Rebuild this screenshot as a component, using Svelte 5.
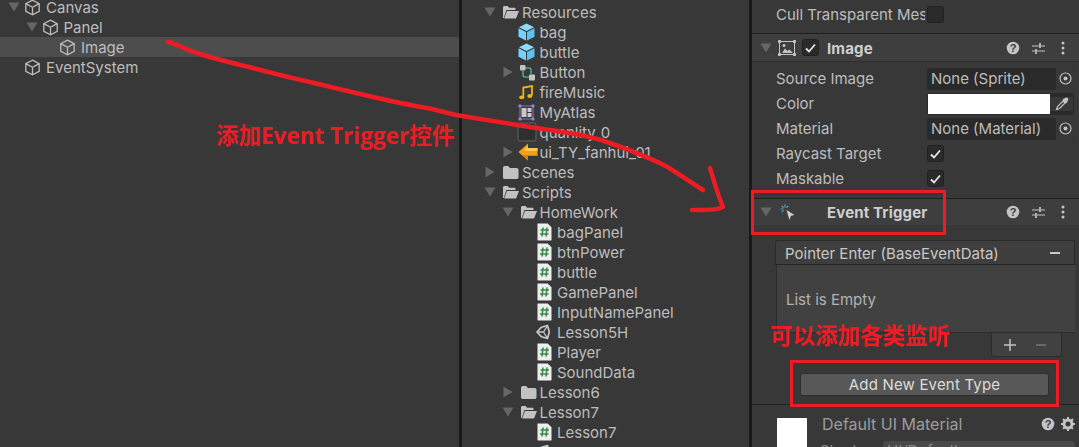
<script>
  const hierarchy = [
    { label: 'Canvas', level: 0, arrow: 'open' },
    { label: 'Panel', level: 1, arrow: 'open' },
    { label: 'Image', level: 2, selected: true },
    { label: 'EventSystem', level: 0 }
  ];
  const project = [
    { label: 'Resources', level: 0, arrow: 'open', icon: 'open' },
    { label: 'bag', level: 1, icon: 'blue' },
    { label: 'buttle', level: 1, icon: 'blue' },
    { label: 'Button', level: 1, arrow: 'closed', icon: 'anim' },
    { label: 'fireMusic', level: 1, icon: 'music' },
    { label: 'MyAtlas', level: 1, icon: 'atlas' },
    { label: 'quanlity_0', level: 1, icon: 'mat' },
    { label: 'ui_TY_fanhui_01', level: 1, arrow: 'closed', icon: 'back' },
    { label: 'Scenes', level: 0, arrow: 'closed', icon: 'folder' },
    { label: 'Scripts', level: 0, arrow: 'open', icon: 'open' },
    { label: 'HomeWork', level: 1, arrow: 'open', icon: 'open' },
    { label: 'bagPanel', level: 2, icon: 'cs' },
    { label: 'btnPower', level: 2, icon: 'cs' },
    { label: 'buttle', level: 2, icon: 'cs' },
    { label: 'GamePanel', level: 2, icon: 'cs' },
    { label: 'InputNamePanel', level: 2, icon: 'cs' },
    { label: 'Lesson5H', level: 2, icon: 'unity' },
    { label: 'Player', level: 2, icon: 'cs' },
    { label: 'SoundData', level: 2, icon: 'cs' },
    { label: 'Lesson6', level: 1, arrow: 'closed', icon: 'folder' },
    { label: 'Lesson7', level: 1, arrow: 'open', icon: 'open' },
    { label: 'Lesson7', level: 2, icon: 'cs' },
    { label: 'Lesson7', level: 2, icon: 'unity' }
  ];
</script>

{#snippet arrow(kind)}
  <span class="arrow">
    {#if kind === 'open'}
      <svg width="12" height="12" viewBox="0 0 12 12"><path d="M0.500 1.500h11L6 10.500z" fill="#666" /></svg>
    {:else if kind === 'closed'}
      <svg width="12" height="12" viewBox="0 0 12 12"><path d="M1.500 0.500v11l9-5.500z" fill="#666" /></svg>
    {/if}
  </span>
{/snippet}

{#snippet cube()}
  <svg class="ic" width="17" height="17" viewBox="0 0 17 17" fill="none" stroke="#bcbcbc" stroke-width="1.300"><path d="M8.500 1.200 15.200 4.600v7.800L8.500 15.800 1.800 12.400V4.600zM1.800 4.600l6.700 3.700 6.700-3.700M8.500 8.300v7.500" /></svg>
{/snippet}

{#snippet asset(kind)}
  {#if kind === 'open'}
    <svg class="ic folder" width="17" height="14" viewBox="0 0 17 14"><path d="M1 13V2.500C1 1.700 1.600 1 2.400 1h3.200l1.600 1.800h5.300c.6 0 1 .5 1 1V5H4.400L1.800 13z" fill="#c2c2c2" /><path d="M4.900 6H17l-3 7.500H2.200z" fill="#c2c2c2" /></svg>
  {:else if kind === 'folder'}
    <svg class="ic folder" width="17" height="14" viewBox="0 0 17 14"><path d="M1 3c0-1 .6-2 1.600-2h3.600l1.700 2h6.700c1 0 1.900.8 1.900 1.800v7.400c0 1-.9 1.800-1.900 1.800H2.600C1.600 14 1 13 1 12z" fill="#c2c2c2" /></svg>
  {:else if kind === 'blue'}
    <svg class="ic blue" width="17" height="18" viewBox="0 0 17 18"><path d="M8.500 0.500 16 4.300 8.500 8.100 1 4.300z" fill="#8cdcfd" /><path d="M.5 5.300l7.500 3.800V17.500L.5 13.700z" fill="#76d2fa" /><path d="M16.500 5.300 9 9.100V17.500l7.500-3.800z" fill="#5cc2f2" /></svg>
  {:else if kind === 'anim'}
    <svg class="ic anim" width="16" height="17" viewBox="0 0 16 17"><path d="M6 4h4.500c.8 0 1.500.7 1.500 1.500V10M10 13H5.500C4.700 13 4 12.300 4 11.500V7" fill="none" stroke="#5ed0b4" stroke-width="1.100" /><rect x="1" y="1" width="5.500" height="5.500" rx="1" fill="#c4c4c4" /><rect x="10" y="10.500" width="6" height="6" rx="1" fill="#c4c4c4" /></svg>
  {:else if kind === 'music'}
    <svg class="ic music" width="14" height="15" viewBox="0 0 14 15"><path d="M4.300 12V2.600L13 1v9.500" fill="none" stroke="#efb50f" stroke-width="1.800" /><ellipse cx="2.700" cy="12.300" rx="2.500" ry="1.900" fill="#efb50f" /><ellipse cx="10.800" cy="11" rx="2.500" ry="1.900" fill="#efb50f" /></svg>
  {:else if kind === 'atlas'}
    <svg class="ic atlas" width="17" height="17" viewBox="0 0 17 17"><rect x="2" y="2" width="13" height="13" fill="none" stroke="#8a70c8" stroke-width="1" /><rect x="3.500" y="4" width="5" height="9" fill="#c8c8c8" /><rect x="9.500" y="4" width="4" height="4" fill="#c8c8c8" /><rect x="9.500" y="9" width="4" height="4" fill="#c8c8c8" /><g fill="#9c82dc"><rect x="0.500" y="0.500" width="3" height="3" rx="1" /><rect x="13.500" y="0.500" width="3" height="3" rx="1" /><rect x="0.500" y="13.500" width="3" height="3" rx="1" /><rect x="13.500" y="13.500" width="3" height="3" rx="1" /></g></svg>
  {:else if kind === 'mat'}
    <svg class="ic mat" width="20" height="20" viewBox="0 0 20 20"><rect x="1" y="1" width="18" height="18" rx="2.500" fill="#2f2f2f" stroke="#555" stroke-width="1.400" /></svg>
  {:else if kind === 'back'}
    <svg class="ic back" width="20" height="18" viewBox="0 0 20 18"><path d="M0.500 9 10 0.500V5h9.500v8H10v4.500z" fill="#f5a013" /><path d="M10 5h9.500v3H5.500L10 3z" fill="#fcc65a" /><path d="M4 12h15.500v1H10v4.500z" fill="#d9820e" /></svg>
  {:else if kind === 'cs'}
    <svg class="ic cs" width="15" height="18" viewBox="0 0 15 18"><path d="M0.500 1.200C.5.600.9.500 1.300.500h9.400L14.500 4.300V17c0 .3-.2.500-.6.500H1c-.3 0-.5-.2-.5-.5z" fill="#eeeeee" /><path d="M3.500 7h8.500M3 11h8.500M6 4.500 5 13.500M10 4.500 9 13.500" stroke="#3b8a4d" stroke-width="1.600" fill="none" /></svg>
  {:else if kind === 'unity'}
    <svg class="ic unity" width="15" height="16" viewBox="0 0 15 16" fill="none" stroke="#c8c8c8"><path d="M1 8 5.500 3.200 11.500 1.500 13.300 8 11.500 14.500 5.500 12.800z" stroke-width="1.700" stroke-linejoin="round" /><path d="M1 8h6.500L11.500 1.500M7.500 8l4 6.500" stroke-width="1.300" /></svg>
  {/if}
{/snippet}

{#snippet headIcons()}
  <div class="head-icons">
    <svg width="14" height="14" viewBox="0 0 14 14"><circle cx="7" cy="7" r="6.300" fill="#c4c4c4" /><text x="7" y="11" text-anchor="middle" class="q">?</text></svg>
    <svg width="14" height="14" viewBox="0 0 14 14" fill="none" stroke="#c4c4c4" stroke-width="1.200"><path d="M1 5h7M10 5h4M1 10h3M6 10h8" /><path d="M9 2v5M5 8v5" stroke-width="1.700" /></svg>
    <svg width="14" height="14" viewBox="0 0 14 14" fill="#c4c4c4"><circle cx="7" cy="2" r="1.500" /><circle cx="7" cy="7" r="1.500" /><circle cx="7" cy="12" r="1.500" /></svg>
  </div>
{/snippet}

{#snippet check(on)}
  <span class="check">
    {#if on}
      <svg width="11" height="10" viewBox="0 0 11 10"><path d="M1 5.500 4 8.500 10 1.500" fill="none" stroke="#e8e8e8" stroke-width="1.800" /></svg>
    {/if}
  </span>
{/snippet}

{#snippet objectField(text)}
  <div class="field obj">
    <span class="obj-text">{text}</span>
    <span class="picker"><svg width="13" height="13" viewBox="0 0 13 13"><circle cx="6.500" cy="6.500" r="5.500" fill="none" stroke="#c4c4c4" stroke-width="1.200" /><circle cx="6.500" cy="6.500" r="2" fill="#c4c4c4" /></svg></span>
  </div>
{/snippet}

<div class="app">
  <section class="hierarchy">
    <div class="tree up">
      {#each hierarchy as row}
        <div class="row hrow" class:selected={row.selected} style="padding-left:{4 + row.level * 17.5}px">
          {@render arrow(row.arrow)}
          <span class="slot">{@render cube()}</span>
          <span class="label">{row.label}</span>
        </div>
      {/each}
    </div>
  </section>

  <section class="project">
    <div class="tree">
      {#each project as row}
        <div class="row" style="padding-left:{18 + row.level * 17.5}px">
          {@render arrow(row.arrow)}
          <span class="slot">{@render asset(row.icon)}</span>
          <span class="label">{row.label}</span>
        </div>
      {/each}
    </div>
  </section>

  <section class="inspector">
    <div class="prop cull">
      <span class="name clip">Cull Transparent Mesh</span>
      {@render check(false)}
    </div>

    <header class="comp-head">
      <svg class="tri" width="12" height="12" viewBox="0 0 12 12"><path d="M0.500 1.500h11L6 10.500z" fill="#666" /></svg>
      <svg class="image-ic" width="18" height="16" viewBox="0 0 18 16" fill="none" stroke="#c4c4c4"><rect x="1.500" y="1.500" width="15" height="13" /><path d="M4 13 7 8.500l2.500 2.500 2-1.500L15 13z" fill="#c4c4c4" stroke="none" /><circle cx="6" cy="5.500" r="1.500" fill="#c4c4c4" stroke="none" /><g fill="#c4c4c4" stroke="none"><rect width="3" height="3" rx=".8" /><rect x="15" width="3" height="3" rx=".8" /><rect y="13" width="3" height="3" rx=".8" /><rect x="15" y="13" width="3" height="3" rx=".8" /></g></svg>
      <span class="head-check">{@render check(true)}</span>
      <span class="comp-title low">Image</span>
      {@render headIcons()}
    </header>

    <div class="props">
      <div class="prop"><span class="name">Source Image</span>{@render objectField('None (Sprite)')}</div>
      <div class="prop">
        <span class="name">Color</span>
        <div class="field color">
          <span class="swatch"></span>
          <span class="dropper"><svg width="14" height="14" viewBox="0 0 14 14"><path d="M8 3 11 6M1.500 12.500l1-3 5.500-5.500 2 2-5.500 5.500z" fill="none" stroke="#c4c4c4" stroke-width="1.200" /><path d="M7.500 2.500 10.500.8c.7-.5 1.600-.3 2.200.3s.8 1.500.3 2.200L11.500 6.500z" fill="#c4c4c4" /></svg></span>
        </div>
      </div>
      <div class="prop"><span class="name">Material</span>{@render objectField('None (Material)')}</div>
      <div class="prop"><span class="name">Raycast Target</span>{@render check(true)}</div>
      <div class="prop"><span class="name">Maskable</span>{@render check(true)}</div>
    </div>

    <header class="comp-head second">
      <svg class="tri" width="12" height="12" viewBox="0 0 12 12"><path d="M0.500 1.500h11L6 10.500z" fill="#666" /></svg>
      <svg class="trigger-ic" width="18" height="17" viewBox="0 0 18 17"><path d="M6.500 6l8 5-3.500.7L9.500 16z" fill="#d0d0d0" /><g stroke="#4aa8d8" stroke-width="1.200" fill="none"><path d="M5 0.500v3M0.500 5h3M1.800 1.800 3.600 3.600M8.200 1.800 6.400 3.600M1.800 8.200 3.600 6.400" /></g></svg>
      <span class="comp-title wide">Event Trigger</span>
      {@render headIcons()}
    </header>

    <div class="event-wrap">
      <div class="event-head">
        <span class="down">Pointer Enter (BaseEventData)</span>
        <span class="minus"></span>
      </div>
      <div class="event-body"><span class="down">List is Empty</span></div>
      <div class="event-foot">
        <svg width="14" height="14" viewBox="0 0 14 14"><path d="M7 1v12M1 7h12" stroke="#c4c4c4" stroke-width="1.500" /></svg>
        <svg width="14" height="14" viewBox="0 0 14 14"><path d="M2 7h10" stroke="#777" stroke-width="1.500" /></svg>
      </div>
      <button class="add">Add New Event Type</button>
    </div>

    <div class="material">
      <span class="preview"></span>
      <div class="mat-main">
        <div class="mat-title">
          <span>Default UI Material</span>
          <span class="mat-icons">
            <svg width="14" height="14" viewBox="0 0 14 14"><circle cx="7" cy="7" r="6.300" fill="#c4c4c4" /><text x="7" y="11" text-anchor="middle" class="q">?</text></svg>
            <svg width="14" height="14" viewBox="0 0 14 14"><circle cx="7" cy="7" r="4" fill="none" stroke="#c4c4c4" stroke-width="3" /><path d="M7 0v14M0 7h14M2 2l10 10M12 2 2 12" stroke="#c4c4c4" stroke-width="2" stroke-dasharray="2.500 9" /></svg>
          </span>
        </div>
        <div class="shader"><span>Shader</span><span class="shader-val">UI/Default</span></div>
      </div>
    </div>
  </section>

  <svg class="ink" width="1079" height="447" viewBox="0 0 1079 447" fill="none" stroke="#ed1c24" stroke-linecap="round" stroke-linejoin="round">
    <path stroke-width="4.500" d="M168 42C178 44 188 51 197 53C215 59 232 63 249 67C275 74 300 80 323 85C360 94 395 103 427 108C437 110 447 113 456 115C480 119 505 123 530 127C555 131 580 133 604 141C625 148 645 156 664 165C678 173 690 182 703 190" />
    <path stroke-width="4.500" d="M710 168C714 182 718 195 723 207C714 211 702 210 692 210" />
    <rect stroke-width="3" x="752.500" y="191.500" width="192" height="42" stroke-linejoin="miter" />
    <rect stroke-width="3" x="791.500" y="361.500" width="266" height="44" stroke-linejoin="miter" />
  </svg>
  <div class="note one">添加Event Trigger控件</div>
  <div class="note two">可以添加各类监听</div>
</div>

<style>
  :global(body) { margin: 0; background: #383838; }
  .app {
    position: relative;
    display: flex;
    width: 1079px;
    height: 447px;
    overflow: hidden;
    background: #191919;
    font-family: Inter, "Noto Sans", sans-serif;
    font-size: 15px;
    color: #bdbdbd;
  }
  .hierarchy { width: 459px; background: #383838; margin-right: 3px; }
  .project { width: 287px; background: #383838; margin-right: 3px; }
  .inspector { flex: 1; min-width: 0; background: #383838; }
  .tree { padding-top: 2px; }
  .tree.up { padding-top: 0; margin-top: -3px; }
  .row { display: flex; align-items: center; height: 20px; white-space: nowrap; }
  .row.selected { background: #4d4d4d; }
  .arrow { width: 20px; display: flex; justify-content: center; flex: none; }
  .slot { width: 22px; flex: none; display: flex; align-items: center; }
  .ic { display: block; }
  .folder { margin-left: 2px; }
  .anim { margin-left: 1px; }
  .music { margin-left: 1px; }
  .mat { margin-left: -1px; }
  .cs { margin-left: 2px; }
  .unity { margin-left: 1px; }

  .prop { display: flex; align-items: center; height: 25px; padding: 0 5px 0 24px; }
  .prop .name { width: 149px; margin-right: 2px; flex: none; }
  .cull { border-bottom: 1px solid #1f1f1f; height: 29px; padding-bottom: 4px; }
  .clip { overflow: hidden; white-space: nowrap; }
  .check { display: flex; align-items: center; justify-content: center; width: 17px; height: 17px; box-sizing: border-box; background: #2a2a2a; border: 1px solid #212121; border-radius: 3px; }
  .comp-head { display: flex; align-items: center; height: 27px; background: #3e3e3e; border-bottom: 1px solid #303030; padding: 0 9px 0 8px; color: #cfcfcf; }
  .comp-head.second { height: 26px; border-top: 1px solid #1f1f1f; border-bottom: 0; }
  .tri { flex: none; }
  .image-ic { margin-left: 6px; }
  .head-check { margin-left: 6px; margin-right: 8px; }
  .trigger-ic { margin-left: 8px; }
  .comp-title { font-weight: 700; flex: 1; letter-spacing: .15px; }
  .comp-title.low { padding-top: 2px; }
  .comp-title.wide { margin-left: 29px; }
  .head-icons { display: flex; gap: 11px; }
  .q { font: 700 11px "Liberation Sans", sans-serif; fill: #3e3e3e; }
  .props { padding-top: 4px; padding-bottom: 7px; }
  .field { height: 22px; box-sizing: border-box; flex: 1; display: flex; align-items: center; background: #2a2a2a; border-radius: 3px; }
  .obj { overflow: hidden; }
  .obj-text { flex: 1; padding-left: 4px; white-space: nowrap; }
  .picker { width: 18px; height: 100%; background: #383838; display: flex; align-items: center; justify-content: center; border-radius: 0 3px 3px 0; }
  .color { border: 1px solid #2a2a2a; }
  .swatch { width: 122px; height: 20px; background: #fff; }
  .dropper { flex: 1; display: flex; justify-content: center; background: #383838; }

  .event-wrap { padding: 15px 4px 0 23px; height: 180px; box-sizing: border-box; border-bottom: 1px solid #232323; }
  .event-head { display: flex; justify-content: space-between; align-items: center; height: 25px; box-sizing: border-box; padding: 0 14px 0 9px; border: 1px solid #2b2b2b; border-bottom-color: #242424; border-radius: 3px 3px 0 0; background: #3e3e3e; color: #c8c8c8; }
  .down { padding-top: 2px; }
  .minus { width: 10px; height: 2px; background: #c8c8c8; }
  .event-body { height: 68px; box-sizing: border-box; display: flex; align-items: center; padding-left: 9px; margin-left: 1px; background: #414141; border: solid #2b2b2b; border-width: 0 0 1px 1px; color: #b2b2b2; }
  .event-foot { width: 71px; height: 24px; box-sizing: border-box; margin: 0 13px 0 auto; display: flex; align-items: center; justify-content: space-around; padding: 0 5px 0 3px; background: #414141; border: solid #2b2b2b; border-width: 0 1px 1px; border-radius: 0 0 3px 3px; }
  .add { display: block; margin: 16px 0 0 25px; width: 249px; height: 23px; padding: 0; font: inherit; letter-spacing: .18px; color: #dcdcdc; background: #585858; border: 1px solid #2f2f2f; border-radius: 3px; }

  .material { display: flex; padding: 13px 4px 0 25px; gap: 15px; }
  .preview { width: 30px; height: 32px; background: #fff; flex: none; }
  .mat-main { flex: 1; min-width: 0; }
  .mat-title { display: flex; justify-content: space-between; align-items: center; height: 11px; font-size: 16px; color: #9c9c9c; }
  .mat-icons { display: flex; gap: 6px; }
  .shader { display: flex; margin-top: 12px; color: #8a8a8a; }
  .shader > span:first-child { width: 63px; margin-left: -2px; }
  .shader-val { flex: 1; background: #4a4a4a; border-radius: 3px; padding-left: 4px; }

  .ink { position: absolute; left: 0; top: 0; pointer-events: none; }
  .note { position: absolute; font-family: "Open Sans", "Noto Sans CJK SC", sans-serif; font-weight: 700; color: #ed1c24; white-space: nowrap; line-height: 1; }
  .note.one { left: 216px; top: 125px; font-size: 22.500px; }
  .note.two { left: 770px; top: 325px; font-size: 22.500px; }
</style>
